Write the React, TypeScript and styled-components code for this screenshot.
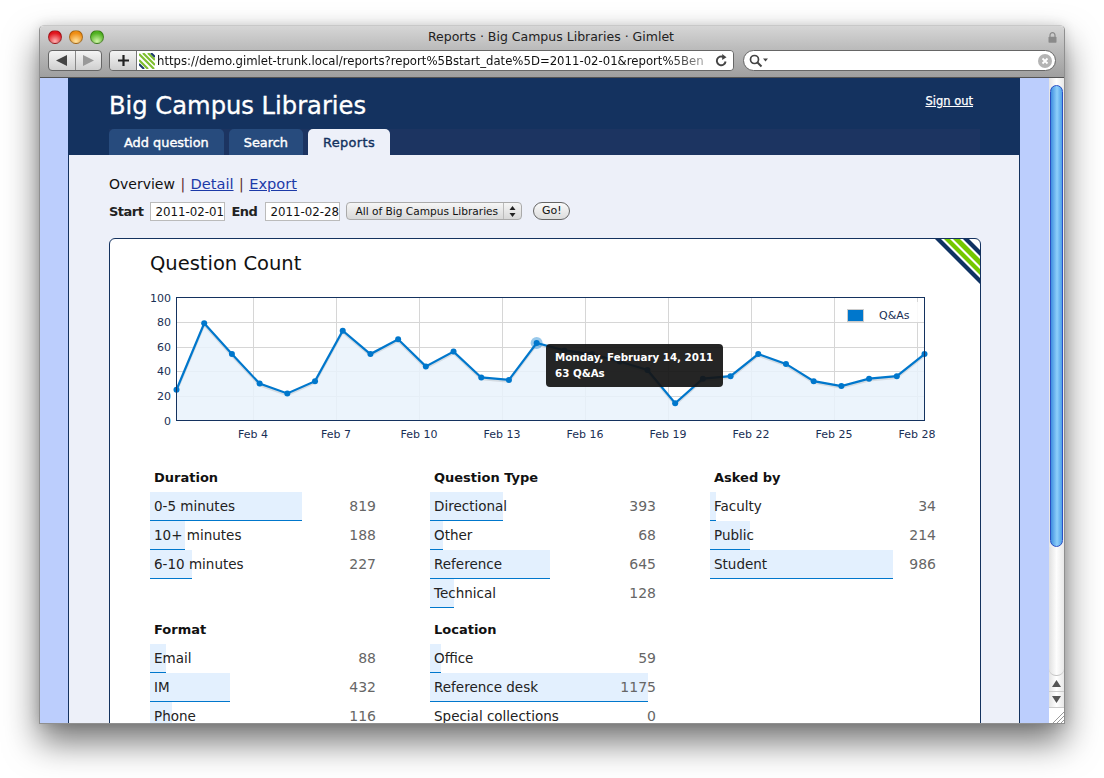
import React from "react";
import styled, { createGlobalStyle } from "styled-components";

const font = `"DejaVu Sans", "Liberation Sans", sans-serif`;

const GlobalStyle = createGlobalStyle`
  html, body {
    margin: 0;
    padding: 0;
    height: 100%;
    overflow: hidden;
    background: #fff;
    font-family: ${font};
  }
`;

const points = [
  25, 79, 54, 30, 22, 32, 73, 54, 66, 44, 56, 35, 33, 63, 57, 54, 48, 41, 14, 34, 36, 54, 46, 32,
  28, 34, 36, 54,
];
const tickLabels = ["Feb 4", "Feb 7", "Feb 10", "Feb 13", "Feb 16", "Feb 19", "Feb 22", "Feb 25", "Feb 28"];

// chart coordinates, svg origin sits at page 150,290
const px = (i: number) => 26.5 + (i * 748) / 27;
const py = (v: number) => 130.5 - v * 1.23;
const line = points.map((v, i) => `${px(i)},${py(v)}`).join(" ");
const area = `26.5,130.5 ${line} 774.5,130.5`;

const maxCount = 1175;
const barScale = 218;

type Stat = { title: string; rows: [string, number][] };

const stats: Stat[] = [
  {
    title: "Duration",
    rows: [
      ["0-5 minutes", 819],
      ["10+ minutes", 188],
      ["6-10 minutes", 227],
    ],
  },
  {
    title: "Question Type",
    rows: [
      ["Directional", 393],
      ["Other", 68],
      ["Reference", 645],
      ["Technical", 128],
    ],
  },
  {
    title: "Asked by",
    rows: [
      ["Faculty", 34],
      ["Public", 214],
      ["Student", 986],
    ],
  },
  {
    title: "Format",
    rows: [
      ["Email", 88],
      ["IM", 432],
      ["Phone", 116],
    ],
  },
  {
    title: "Location",
    rows: [
      ["Office", 59],
      ["Reference desk", 1175],
      ["Special collections", 0],
    ],
  },
];

const App = () => {
  return (
    <>
      <GlobalStyle />
      <Window>
        <TitleBar>
          <Lights>
            <Light $c1="#ffb3b3" $c2="#e0141c" />
            <Light $c1="#ffe3a0" $c2="#ee8c12" />
            <Light $c1="#d0f5a8" $c2="#4fb020" />
          </Lights>
          <WindowTitle>Reports · Big Campus Libraries · Gimlet</WindowTitle>
          <LockWrap>
            <svg width="9" height="11" viewBox="0 0 9 11">
              <path d="M2 5V3.2a2.5 2.5 0 0 1 5 0V5" fill="none" stroke="#8a8a8a" strokeWidth="1.2" />
              <rect x="0.5" y="4.8" width="8" height="6" rx="0.8" fill="#8a8a8a" />
            </svg>
          </LockWrap>
        </TitleBar>
        <Toolbar>
          <NavGroup>
            <NavButton>
              <svg width="13" height="11" viewBox="0 0 13 11">
                <path d="M1 5.5 12 0v11z" fill="#444" />
              </svg>
            </NavButton>
            <NavButton>
              <svg width="13" height="11" viewBox="0 0 13 11">
                <path d="M12 5.5 1 0v11z" fill="#999" />
              </svg>
            </NavButton>
          </NavGroup>
          <AddressGroup>
            <PlusButton>
              <svg width="13" height="13" viewBox="0 0 13 13">
                <path d="M6.5 1v11M1 6.5h11" stroke="#222" strokeWidth="2.2" />
              </svg>
            </PlusButton>
            <UrlField>
              <svg width="16" height="16" viewBox="0 0 16 16">
                <path d="M0 7 9 16M0 1 15 16" stroke="#7fbf30" strokeWidth="2.2" />
                <path d="M4 0 16 12M9 0 16 7" stroke="#7fbf30" strokeWidth="2.2" />
                <path d="M0 11 5 16M12 0 16 4" stroke="#1c3a6b" strokeWidth="2" />
              </svg>
              <UrlText>https://demo.gimlet-trunk.local/reports?report%5Bstart_date%5D=2011-02-01&amp;report%5Ben</UrlText>
              <svg width="13" height="13" viewBox="0 0 13 13">
                <path d="M10.6 7.5A4.4 4.4 0 1 1 8.4 3" fill="none" stroke="#444" strokeWidth="1.9" />
                <path d="M7.2 0 11.5 3.2 7.2 6z" fill="#444" />
              </svg>
            </UrlField>
          </AddressGroup>
          <SearchField>
            <svg width="20" height="14" viewBox="0 0 20 14">
              <circle cx="5.5" cy="5.5" r="4" fill="none" stroke="#444" strokeWidth="1.7" />
              <path d="M8.5 8.5 12.5 12.5" stroke="#444" strokeWidth="2" />
              <path d="M14 4.5h5l-2.5 3z" fill="#444" />
            </svg>
            <svg width="14" height="14" viewBox="0 0 14 14">
              <circle cx="7" cy="7" r="7" fill="#b4b4b4" />
              <path d="M4.5 4.5 9.5 9.5M9.5 4.5 4.5 9.5" stroke="#fff" strokeWidth="1.8" />
            </svg>
          </SearchField>
        </Toolbar>
        <Viewport>
          <Gutter>
            <Page>
              <Header>
                <HeaderTop>
                  <SiteTitle>Big Campus Libraries</SiteTitle>
                  <SignOut href="#">Sign out</SignOut>
                </HeaderTop>
                <Tabs>
                  <Tab>Add question</Tab>
                  <Tab>Search</Tab>
                  <Tab $active>Reports</Tab>
                </Tabs>
              </Header>
              <Body>
                <SubNav>
                  Overview <Sep>|</Sep> <SubLink href="#">Detail</SubLink> <Sep>|</Sep>{" "}
                  <SubLink href="#">Export</SubLink>
                </SubNav>
                <Filters>
                  <FilterLabel $gap={7}>Start</FilterLabel>
                  <DateBox>2011-02-01</DateBox>
                  <FilterLabel $gap={8}>End</FilterLabel>
                  <DateBox>2011-02-28</DateBox>
                  <SelectBox>
                    <SelectText>All of Big Campus Libraries</SelectText>
                    <SelectArrows>
                      <svg width="7" height="11" viewBox="0 0 7 11">
                        <path d="M3.5 0 6.5 4h-6zM3.5 11 .5 7h6z" fill="#222" />
                      </svg>
                    </SelectArrows>
                  </SelectBox>
                  <GoButton>Go!</GoButton>
                </Filters>
                <Card>
                  <Corner>
                    <svg width="46" height="46" viewBox="0 0 46 46">
                      <path d="M0 0h6l46 46h-6z" fill="#0f3263" />
                      <path d="M9 0h6l46 46h-6z" fill="#74c800" />
                      <path d="M18 0h7l46 46h-7z" fill="#74c800" />
                      <path d="M28 0h6l46 46h-6z" fill="#0f3263" />
                    </svg>
                  </Corner>
                  <CardTitle>Question Count</CardTitle>
                  <ChartWrap>
                    <svg width="800" height="155" viewBox="0 0 800 155">
                      {[0, 1, 2, 3, 4, 5, 6, 7, 8].map((i) => (
                        <path key={i} d={`M${103.5 + i * 83} 7v123`} stroke="#d6d6d6" />
                      ))}
                      {[20, 40, 60, 80].map((v) => (
                        <path key={v} d={`M26 ${Math.round(py(v)) + 0.5}h748`} stroke="#d6d6d6" />
                      ))}
                      <polygon points={area} fill="#e9f2fb" fillOpacity="0.85" />
                      <polyline
                        points={line}
                        fill="none"
                        stroke="#000"
                        strokeOpacity="0.1"
                        strokeWidth="2.5"
                        transform="translate(0 1.5)"
                      />
                      <polyline points={line} fill="none" stroke="#0077cc" strokeWidth="2.2" />
                      {points.map((v, i) => (
                        <circle key={i} cx={px(i)} cy={py(v)} r="3" fill="#0077cc" />
                      ))}
                      <circle cx={px(13)} cy={py(63)} r="6" fill="#0077cc" fillOpacity="0.4" />
                      <rect x="26.5" y="7.5" width="748" height="123" fill="none" stroke="#14325f" />
                      <rect x="692" y="12" width="76" height="20" fill="#fff" fillOpacity="0.85" />
                      <rect x="697.5" y="19.5" width="16" height="12" fill="#0077cc" stroke="#ccc" />
                      <text x="729" y="29" fontSize="11" fill="#1a2f55" fontFamily={font}>
                        Q&amp;As
                      </text>
                      {[0, 20, 40, 60, 80, 100].map((v) => (
                        <text key={v} x="21" y={py(v) + 4} textAnchor="end" fontSize="11" fill="#1a2f55" fontFamily={font}>
                          {v}
                        </text>
                      ))}
                      {tickLabels.map((t, i) => (
                        <text key={t} x={103 + i * 83} y="148" textAnchor="middle" fontSize="11" fill="#1a2f55" fontFamily={font}>
                          {t}
                        </text>
                      ))}
                    </svg>
                    <Tooltip>
                      Monday, February 14, 2011
                      <br />
                      63 Q&amp;As
                    </Tooltip>
                  </ChartWrap>
                  <StatGrid>
                    {stats.map((s) => (
                      <StatBlock key={s.title}>
                        <StatTitle>{s.title}</StatTitle>
                        {s.rows.map(([label, count]) => (
                          <StatRow key={label}>
                            {count > 0 && <Bar style={{ width: Math.round((count / maxCount) * barScale) }} />}
                            <StatLabel>{label}</StatLabel>
                            <StatValue>{count}</StatValue>
                          </StatRow>
                        ))}
                      </StatBlock>
                    ))}
                  </StatGrid>
                </Card>
              </Body>
            </Page>
          </Gutter>
          <ScrollBar>
            <ScrollCap />
            <Thumb />
            <Track />
            <ArrowButton>
              <svg width="9" height="7" viewBox="0 0 9 7">
                <path d="M4.5 0 9 7H0z" fill="#555" />
              </svg>
            </ArrowButton>
            <ArrowButton>
              <svg width="9" height="7" viewBox="0 0 9 7">
                <path d="M4.5 7 9 0H0z" fill="#555" />
              </svg>
            </ArrowButton>
            <Resize>
              <svg width="12" height="12" viewBox="0 0 12 12">
                <path d="M1 12 12 1M5 12 12 5M9 12 12 9" stroke="#999" />
              </svg>
            </Resize>
          </ScrollBar>
        </Viewport>
      </Window>
    </>
  );
};

export default App;

const Window = styled.div`
  width: 1024px;
  height: 697px;
  margin: 25px 0 0 39px;
  border: 1px solid #8f8f8f;
  border-top-color: #c8c8c8;
  border-radius: 5px 5px 0 0;
  display: flex;
  flex-direction: column;
  overflow: hidden;
  box-shadow: 0 18px 34px rgba(0, 0, 0, 0.55), 0 0 12px rgba(0, 0, 0, 0.12);
`;

const TitleBar = styled.div`
  flex: none;
  height: 22px;
  display: grid;
  grid-template-columns: 1fr auto 1fr;
  align-items: center;
  padding: 0 8px;
  background: linear-gradient(#d6d6d6, #bcbcbc);
`;

const Lights = styled.div`
  display: flex;
  gap: 7px;
`;

const Light = styled.span<{ $c1: string; $c2: string }>`
  width: 14px;
  height: 14px;
  border-radius: 50%;
  border: 1px solid rgba(0, 0, 0, 0.3);
  box-sizing: border-box;
  background: radial-gradient(circle at 50% 85%, ${(p) => p.$c1}, ${(p) => p.$c2} 70%);
`;

const WindowTitle = styled.div`
  font-size: 12.5px;
  color: #222;
  position: relative;
  left: -1px;
  top: -1px;
`;

const LockWrap = styled.div`
  justify-self: end;
  display: flex;
  position: relative;
  left: 1px;
`;

const Toolbar = styled.div`
  flex: none;
  height: 30px;
  display: flex;
  align-items: flex-start;
  padding: 2px 8px 0 8px;
  box-sizing: border-box;
  background: linear-gradient(#bcbcbc, #9f9f9f);
  border-bottom: 1px solid #555;
`;

const NavGroup = styled.div`
  display: flex;
  width: 54px;
  height: 21px;
  box-sizing: border-box;
  border: 1px solid #666;
  border-radius: 4px;
  background: linear-gradient(#f4f4f4, #cfcfcf);
  overflow: hidden;
`;

const NavButton = styled.div`
  flex: 1;
  display: flex;
  align-items: center;
  justify-content: center;
  & + & {
    border-left: 1px solid #888;
  }
`;

const AddressGroup = styled.div`
  display: flex;
  margin-left: 7px;
  width: 625px;
  height: 21px;
  box-sizing: border-box;
  border: 1px solid #666;
  border-radius: 4px;
  overflow: hidden;
`;

const PlusButton = styled.div`
  flex: none;
  width: 27px;
  display: flex;
  align-items: center;
  justify-content: center;
  background: linear-gradient(#f4f4f4, #cfcfcf);
  border-right: 1px solid #777;
  box-sizing: border-box;
`;

const UrlField = styled.div`
  flex: 1;
  min-width: 0;
  display: flex;
  align-items: center;
  gap: 2px;
  padding: 0 5px 0 2px;
  background: #fff;
`;

const UrlText = styled.div`
  flex: 1;
  min-width: 0;
  font-size: 11.7px;
  padding-top: 1px;
  color: #111;
  white-space: nowrap;
  -webkit-mask-image: linear-gradient(to right, #000 92%, rgba(0, 0, 0, 0.25));
  mask-image: linear-gradient(to right, #000 92%, rgba(0, 0, 0, 0.25));
`;

const SearchField = styled.div`
  margin-left: 9px;
  width: 313px;
  height: 21px;
  box-sizing: border-box;
  border: 1px solid #666;
  border-radius: 11px;
  background: #fff;
  display: flex;
  align-items: center;
  justify-content: space-between;
  padding: 0 3px 0 5px;
`;

const Viewport = styled.div`
  flex: 1;
  min-height: 0;
  display: flex;
`;

const Gutter = styled.div`
  flex: 1;
  min-width: 0;
  background: #bccefd;
  padding-left: 28px;
  overflow: hidden;
`;

const Page = styled.div`
  width: 952px;
  box-sizing: border-box;
  border-left: 1px solid #14325f;
  border-right: 1px solid #14325f;
  background: #edf0f9;
  min-height: 100%;
`;

const Header = styled.div`
  height: 77px;
  padding: 0 39px 0 40px;
  background: #14325f;
  display: flex;
  flex-direction: column;
`;

const HeaderTop = styled.div`
  flex: 1;
  display: flex;
  justify-content: space-between;
  padding: 12px 7px 0 0;
`;

const SiteTitle = styled.h1`
  margin: 0;
  font-size: 24.2px;
  line-height: 32px;
  font-weight: 400;
  color: #fff;
  -webkit-text-stroke: 0.35px #fff;
`;

const SignOut = styled.a`
  font-size: 11.5px;
  line-height: 22px;
  color: #fff;
  text-decoration: underline;
  -webkit-text-stroke: 0.25px #fff;
`;

const Tabs = styled.div`
  display: flex;
  gap: 5px;
  height: 26px;
  background: #1c3461;
`;

const Tab = styled.div<{ $active?: boolean }>`
  padding: 0 15px;
  border-radius: 5px 5px 0 0;
  font-size: 12.9px;
  line-height: 27px;
  font-weight: 400;
  letter-spacing: ${(p) => (p.$active ? "0.35px" : "0")};
  color: ${(p) => (p.$active ? "#14325f" : "#fff")};
  -webkit-text-stroke: 0.4px ${(p) => (p.$active ? "#14325f" : "#fff")};
  background: ${(p) => (p.$active ? "#edf0f9" : "#274b7d")};
`;

const Body = styled.div`
  padding: 19px 0 0 40px;
`;

const SubNav = styled.div`
  font-size: 14px;
  line-height: 20px;
  color: #111;
`;

const Sep = styled.span`
  color: #5a2a2a;
  margin: 0 1px;
`;

const SubLink = styled.a`
  font-size: 14.6px;
  color: #1c3aa8;
  text-decoration: underline;
`;

const Filters = styled.div`
  display: flex;
  align-items: center;
  margin-top: 8px;
  height: 18px;
`;

const FilterLabel = styled.span<{ $gap: number }>`
  font-size: 13px;
  font-weight: 700;
  letter-spacing: -0.5px;
  color: #222;
  margin-right: ${(p) => p.$gap}px;
`;

const DateBox = styled.div`
  width: 75px;
  height: 19px;
  box-sizing: border-box;
  border: 1px solid #bbb;
  background: #fff;
  font-size: 11.8px;
  line-height: 18px;
  padding-left: 4px;
  color: #111;
  overflow: hidden;
  white-space: nowrap;
  margin-right: 6px;
`;

const SelectBox = styled.div`
  width: 176px;
  height: 18px;
  box-sizing: border-box;
  border: 1px solid #aaa;
  border-radius: 4px;
  background: linear-gradient(#f6f6f6, #d8d8d8);
  display: flex;
  font-size: 10.6px;
  line-height: 16px;
  color: #111;
`;

const SelectText = styled.div`
  flex: 1;
  padding-left: 8px;
  white-space: nowrap;
  overflow: hidden;
`;

const SelectArrows = styled.div`
  width: 17px;
  border-left: 1px solid #bbb;
  display: flex;
  align-items: center;
  justify-content: center;
`;

const GoButton = styled.div`
  margin-left: 11px;
  width: 37px;
  height: 18px;
  box-sizing: border-box;
  border: 1px solid #666;
  border-radius: 9px;
  background: linear-gradient(#fafafa, #dcdcdc);
  font-size: 11px;
  line-height: 16px;
  text-align: center;
  color: #111;
`;

const Card = styled.div`
  position: relative;
  width: 872px;
  box-sizing: border-box;
  margin-top: 18px;
  border: 1px solid #14325f;
  border-radius: 6px;
  background: #fff;
  overflow: hidden;
  padding: 12px 0 40px 40px;
`;

const Corner = styled.div`
  position: absolute;
  top: 0;
  right: 0;
  width: 45px;
  height: 45px;
  overflow: hidden;
`;

const CardTitle = styled.h2`
  margin: 0;
  font-size: 19.5px;
  line-height: 26px;
  font-weight: 400;
  color: #111;
`;

const ChartWrap = styled.div`
  position: relative;
  margin-top: 13px;
  height: 155px;
`;

const Tooltip = styled.div`
  position: absolute;
  left: 396px;
  top: 54px;
  width: 177px;
  height: 43px;
  box-sizing: border-box;
  padding: 5px 9px;
  border-radius: 4px;
  background: rgba(20, 20, 20, 0.93);
  color: #fff;
  font-size: 10.3px;
  line-height: 16px;
  font-weight: 700;
  white-space: nowrap;
`;

const StatGrid = styled.div`
  display: grid;
  grid-template-columns: repeat(3, 226px);
  column-gap: 54px;
  row-gap: 13px;
  margin-top: 23px;
`;

const StatBlock = styled.div``;

const StatTitle = styled.div`
  font-size: 13px;
  line-height: 20px;
  font-weight: 700;
  color: #111;
  padding-left: 4px;
  margin-bottom: 3px;
`;

const StatRow = styled.div`
  position: relative;
  height: 29px;
  display: flex;
  justify-content: space-between;
  align-items: center;
  font-size: 13.5px;
`;

const Bar = styled.div`
  position: absolute;
  left: 0;
  top: 1px;
  bottom: -1px;
  box-sizing: border-box;
  background: #e3f0fe;
  border-bottom: 1px solid #0077cc;
`;

const StatLabel = styled.span`
  position: relative;
  padding-left: 4px;
  color: #222;
`;

const StatValue = styled.span`
  position: relative;
  font-size: 14px;
  color: #666;
`;

const ScrollBar = styled.div`
  flex: none;
  width: 15px;
  display: flex;
  flex-direction: column;
  background: linear-gradient(to right, #e4e4e4, #fff 50%, #e8e8e8);
`;

const ScrollCap = styled.div`
  flex: none;
  height: 7px;
`;

const Thumb = styled.div`
  flex: none;
  height: 462px;
  margin: 0 1px;
  border-radius: 7px;
  border: 1px solid #2a4fc4;
  box-sizing: border-box;
  background: linear-gradient(to right, #3f8fe0, #8fd0fa 55%, #4f9fe8);
`;

const Track = styled.div`
  flex: 1;
  border-radius: 0 0 7px 7px;
  border-bottom: 1px solid #c4c4c4;
  background: linear-gradient(to right, #e0e0e0, #fdfdfd 50%, #e8e8e8);
`;

const ArrowButton = styled.div`
  flex: none;
  height: 16px;
  display: flex;
  align-items: center;
  justify-content: center;
  border-bottom: 1px solid #ccc;
  box-sizing: border-box;
`;

const Resize = styled.div`
  flex: none;
  height: 15px;
  background: #fff;
  display: flex;
  align-items: flex-end;
  justify-content: flex-end;
`;
